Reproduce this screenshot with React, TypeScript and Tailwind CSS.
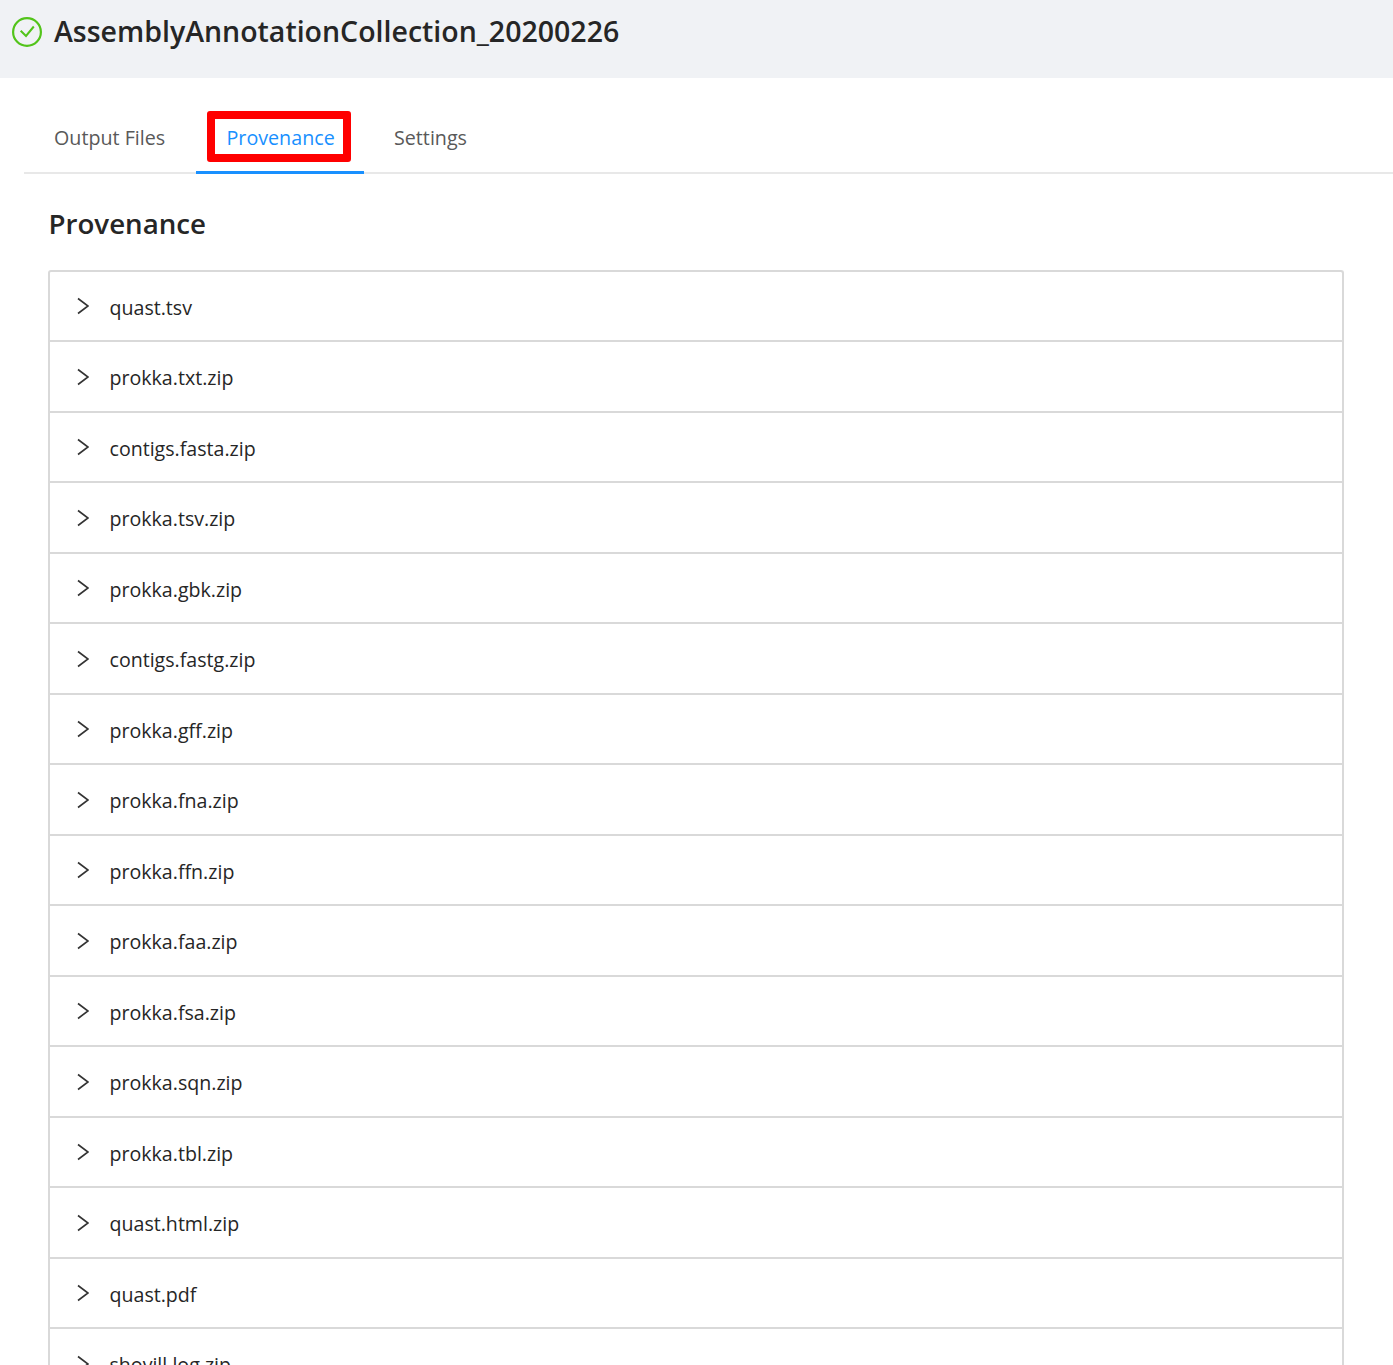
const files = ["quast.tsv","prokka.txt.zip","contigs.fasta.zip","prokka.tsv.zip","prokka.gbk.zip","contigs.fastg.zip","prokka.gff.zip","prokka.fna.zip","prokka.ffn.zip","prokka.faa.zip","prokka.fsa.zip","prokka.sqn.zip","prokka.tbl.zip","quast.html.zip","quast.pdf","shovill.log.zip"];

export default function App() {
  return (
    <div className="h-[1365px] overflow-hidden bg-white font-['Open_Sans','Noto_Sans',sans-serif] text-[#262626]">
      <header className="flex h-[78px] items-start bg-[#f0f2f5] pl-3 pt-[17px]">
        <svg width="30" height="30" viewBox="0 0 30 30" fill="none" className="shrink-0">
          <circle cx="15" cy="15" r="13.9" stroke="#52c41a" strokeWidth="2.2" />
          <path d="M8.7 13.7L14 19L21.8 9.5" stroke="#52c41a" strokeWidth="2" />
        </svg>
        <h1 className="ml-3 -mt-px text-[28.5px] leading-[30px] font-semibold whitespace-nowrap">AssemblyAnnotationCollection_20200226</h1>
      </header>
      <nav className="relative ml-6 flex h-[96px] items-end border-b-2 border-[#e8e8e8] text-[19.7px] text-[#595959]">
        <div className="w-[172px] pb-[19px] pl-[30px] leading-[30px]">Output Files</div>
        <div className="relative -mb-[2px] w-[168px] border-b-[3px] border-[#1890ff] pb-[18px] pl-[30.5px] leading-[30px] text-[#1890ff]">
          Provenance
          <div className="absolute -top-[12px] left-[11px] h-[51px] w-[144px] rounded-[3px] border-[8px] border-[#ff0000]" />
        </div>
        <div className="pb-[19px] pl-[30px] leading-[30px]">Settings</div>
      </nav>
      <main className="pl-12 pr-[49px]">
        <h2 className="mt-[32px] mb-[29.5px] pl-[0.5px] text-[27.7px] leading-[34px] font-semibold">Provenance</h2>
        <ul className="rounded-[3px] border-x-2 border-t-2 border-[#d9d9d9]">
          {files.map((f) => (
            <li key={f} className="flex h-[70.5px] items-center border-b-2 border-[#d9d9d9] pt-[3px] text-[19.6px] text-[#262626]">
              <svg width="12" height="18" viewBox="0 0 12 18" fill="none" className="ml-[27px] -mt-[2px] shrink-0">
                <path d="M1 1.5l10 7.5-10 7.5" stroke="#333" strokeWidth="1.6" />
              </svg>
              <span className="ml-[20.5px]">{f}</span>
            </li>
          ))}
        </ul>
      </main>
    </div>
  );
}
